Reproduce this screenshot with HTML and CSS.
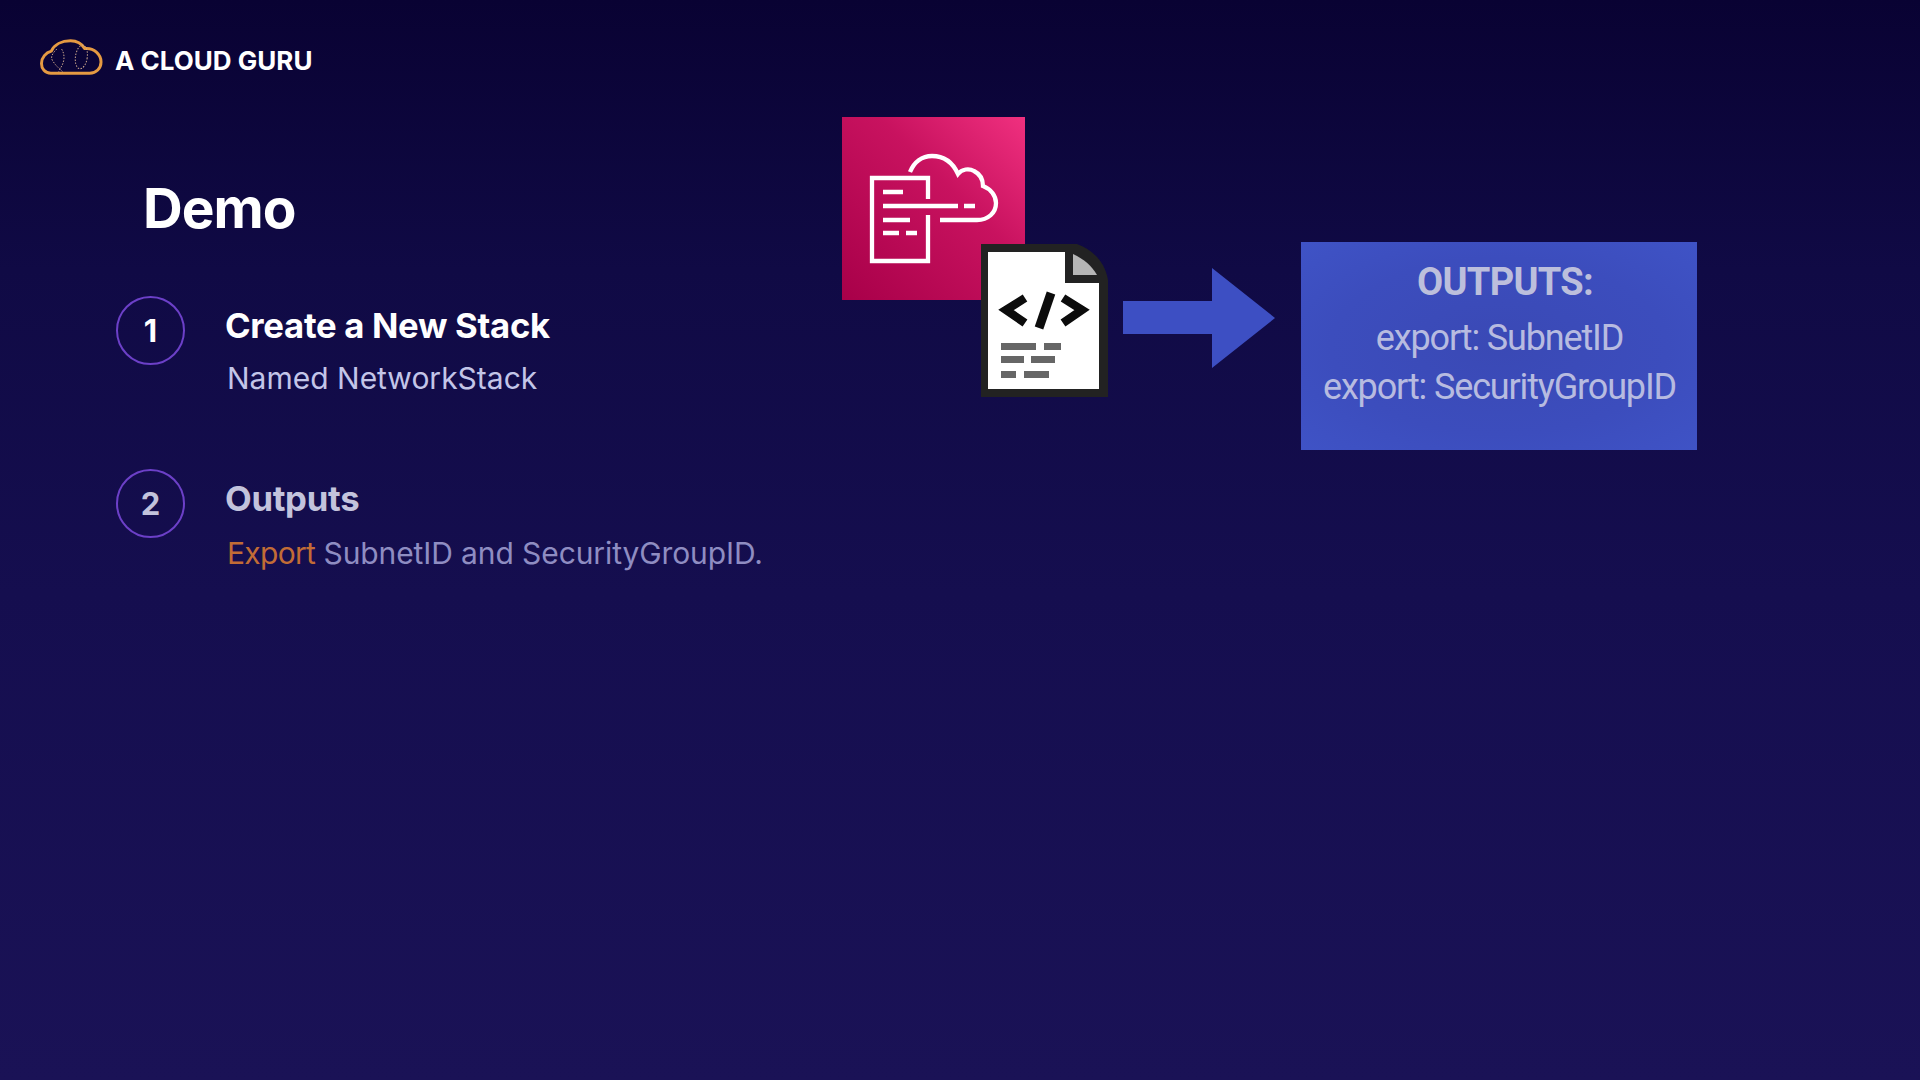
FILE: index.html
```html
<!DOCTYPE html>
<html lang="en">
<head>
<meta charset="utf-8">
<title>Demo</title>
<link rel="stylesheet" href="styles.css">
</head>
<body>
<div class="slide">
  <header class="brand">
    <svg class="brand-logo" viewBox="0 0 64 36" width="63" height="36" aria-hidden="true">
      <path class="cloud" d="M11 34.500C5 34.500 1.500 30 1.500 24.500C1.500 18.500 6 13.500 11.500 12C14.500 5.500 22 1.500 31 1.500C37 1.500 42.500 4.500 45.500 9.500C55 8.500 62 15.500 62 23C62 29.500 57 34.500 50.500 34.500Z"/>
      <ellipse class="dash" cx="42" cy="18" rx="6" ry="12" transform="rotate(8 42 18)"/>
      <path class="dash" d="M17 10C13 14 10 18 13 22C16 27 20 30 23 33M22 10C25 15 25 20 23 25C22 28 20 30 19 33"/>
    </svg>
    <span class="brand-name">A CLOUD GURU</span>
  </header>

  <main class="content">
    <h1 class="heading">Demo</h1>
    <ol class="steps">
      <li class="step">
        <span class="step-num">1</span>
        <div class="step-body">
          <h2 class="step-title">Create a New Stack</h2>
          <p class="step-text">Named NetworkStack</p>
        </div>
      </li>
      <li class="step step-dim">
        <span class="step-num">2</span>
        <div class="step-body">
          <h2 class="step-title">Outputs</h2>
          <p class="step-text"><span class="accent">Export</span> SubnetID and SecurityGroupID.</p>
        </div>
      </li>
    </ol>
  </main>

  <div class="diagram">
    <svg class="cf-icon" viewBox="0 0 183 183" width="183" height="183" aria-hidden="true">
      <defs>
        <linearGradient id="pink" x1="0" y1="1" x2="1" y2="0">
          <stop offset="0" stop-color="#a80049"/>
          <stop offset="0.6" stop-color="#c8125f"/>
          <stop offset="1" stop-color="#f0307f"/>
        </linearGradient>
      </defs>
      <rect width="183" height="183" fill="url(#pink)"/>
      <g fill="none" stroke="#fff" stroke-width="4.300">
        <path d="M86 82V61H30V144H86V98"/>
        <path d="M41 75H61M41 89H116M122 89H133M41 103H68M41 116H57M64 116H75"/>
        <path d="M68 55C72 45 80 39 90 39C102 39 111 46 116 57C120 52 127 51 132 54C138 57 141 63 141 69C149 72 154 79 154 86C154 96 146 103 135 103H98"/>
      </g>
    </svg>
    <svg class="doc-icon" viewBox="0 0 127 153" width="127" height="153" aria-hidden="true">
      <path d="M0 0H96C112 6 124 18 127 36V153H0Z" fill="#222"/>
      <path d="M7 8H84V39H118V145H7Z" fill="#fff"/>
      <path d="M92 10C103 15 111 22 116 31H92Z" fill="#b5b5b5"/>
      <g fill="none" stroke="#0c0c0c" stroke-width="8.500">
        <path d="M44 54L25 66L44 79M82 54L101 66L82 79"/>
        <path d="M70 49L58 84" stroke-width="9"/>
      </g>
      <g fill="#666">
        <rect x="20" y="99" width="35" height="7"/>
        <rect x="63" y="99" width="17" height="7"/>
        <rect x="20" y="112" width="23" height="7"/>
        <rect x="50" y="112" width="24" height="7"/>
        <rect x="20" y="127" width="15" height="7"/>
        <rect x="43" y="127" width="25" height="7"/>
      </g>
    </svg>
    <svg class="arrow" viewBox="0 0 153 100" width="153" height="100" aria-hidden="true">
      <path d="M0 33H89V0L152 50L89 100V66H0Z" fill="#3d4fc3"/>
    </svg>
    <div class="outputs">
      <div class="outputs-title">OUTPUTS:</div>
      <div class="outputs-line">export: SubnetID</div>
      <div class="outputs-line">export: SecurityGroupID</div>
    </div>
  </div>
</div>
</body>
</html>
```

FILE: styles.css
```css
* { box-sizing: border-box; }
html, body { margin: 0; padding: 0; }
body { width: 1920px; height: 1080px; overflow: hidden; background: #170f52; }

.slide {
  position: relative;
  width: 1920px;
  height: 1080px;
  display: flex;
  flex-direction: column;
  background: linear-gradient(180deg, #090233 0%, #100a45 25%, #150e4f 55%, #1a1256 100%);
  font-family: Inter, "Noto Sans", sans-serif;
  color: #fff;
}

.brand {
  display: flex;
  align-items: center;
  gap: 12px;
  padding: 38px 0 0 40px;
  height: 76px;
}
.brand-logo { display: block; flex: none; }
.cloud { fill: none; stroke: #e59a42; stroke-width: 3; stroke-linejoin: round; }
.dash { fill: none; stroke: #d0ab8e; stroke-width: 1; stroke-dasharray: 1.500 1.500; }
.brand-name {
  font-family: Inter, sans-serif;
  font-size: 26px;
  font-weight: 700;
  line-height: 30px;
  margin-top: 8px;
}

.content {
  display: flex;
  flex-direction: column;
  padding: 99px 0 0 116px;
}
.heading {
  margin: 0 0 0 27px;
  font-size: 55px;
  line-height: 66px;
  font-weight: 700;
  letter-spacing: -1px;
}
.steps {
  list-style: none;
  margin: 55px 0 0;
  padding: 0;
  display: flex;
  flex-direction: column;
  gap: 104px;
}
.step {
  display: flex;
  align-items: flex-start;
  gap: 40px;
  height: 69px;
}
.step-num {
  flex: none;
  width: 69px;
  height: 69px;
  display: flex;
  align-items: center;
  justify-content: center;
  border: 2px solid #6c40c8;
  border-radius: 50%;
  font-size: 31px;
  font-weight: 700;
}
.step-body { display: flex; flex-direction: column; padding-top: 8px; }
.step-title {
  margin: 0;
  font-size: 34.700px;
  line-height: 42px;
  font-weight: 700;
  letter-spacing: -0.3px;
}
.step-text {
  margin: 12px 0 0 2px;
  font-size: 30px;
  line-height: 40px;
  font-weight: 400;
  color: #c3c5e8;
}
.step-dim .step-num, .step-dim .step-title { color: #c3c3dc; }
.step-dim .step-text { color: #8f8dc2; margin-top: 14px; letter-spacing: -0.1px; }
.accent { color: #c26c36; letter-spacing: -0.7px; }

.diagram { position: absolute; inset: 0; pointer-events: none; }
.cf-icon { position: absolute; left: 842px; top: 117px; display: block; }
.doc-icon { position: absolute; left: 981px; top: 244px; display: block; }
.arrow { position: absolute; left: 1123px; top: 268px; display: block; }
.outputs {
  position: absolute;
  left: 1301px;
  top: 242px;
  width: 396px;
  height: 208px;
  display: flex;
  flex-direction: column;
  align-items: center;
  padding-top: 16px;
  background: radial-gradient(ellipse at center, #3a49b5 0%, #3c4dbd 60%, #3f53c6 100%);
  font-family: Roboto, sans-serif;
  color: #b7bbe0;
}
.outputs-title {
  font-size: 38px;
  line-height: 48px;
  font-weight: 700;
  letter-spacing: -0.7px;
  margin: 0 0 8px 12px;
  color: #bcbfdc;
}
.outputs-line {
  font-size: 36px;
  line-height: 49px;
  letter-spacing: -1.150px;
  margin-left: 1px;
}
```
